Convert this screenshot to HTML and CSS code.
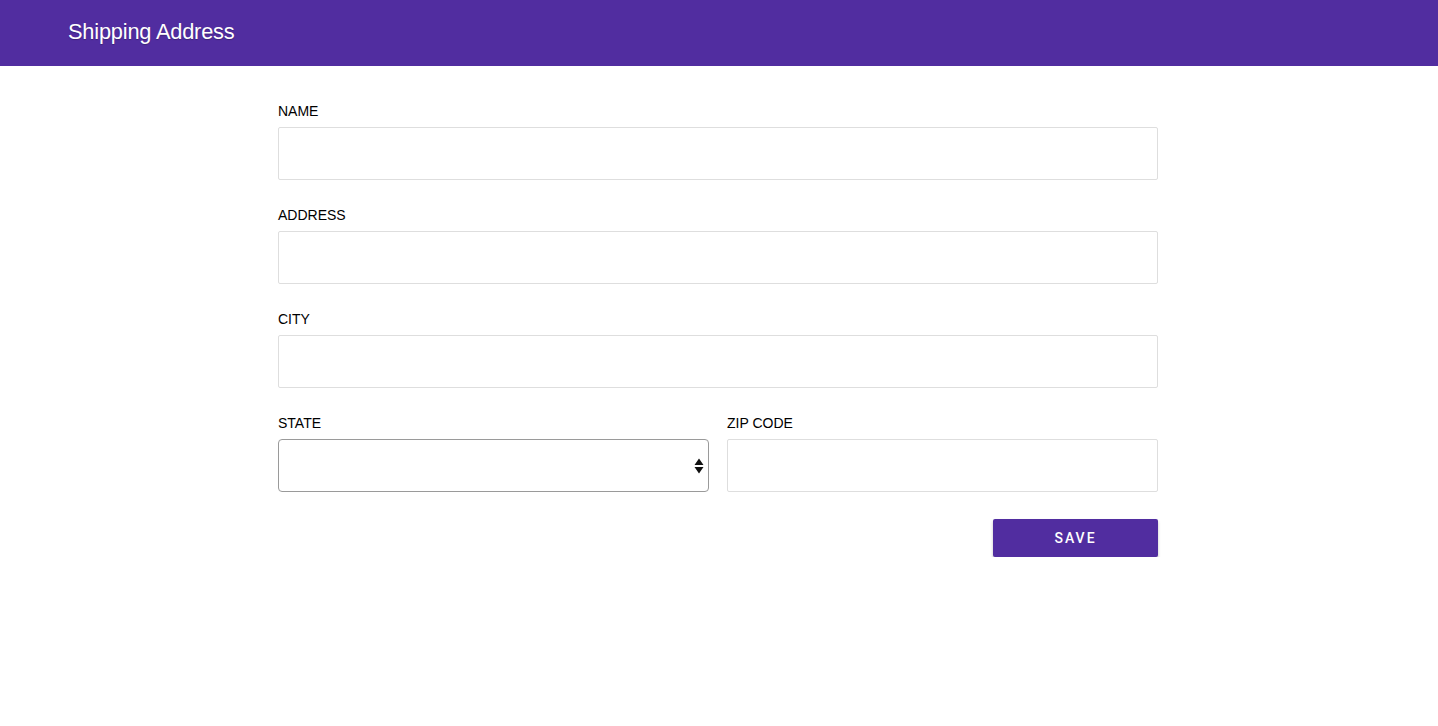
FILE: index.html
```html
<!DOCTYPE html>
<html lang="en">
<head>
<meta charset="utf-8">
<title>Shipping Address</title>
<link rel="stylesheet" href="styles.css">
</head>
<body>
<header class="topbar">
  <h1 class="title">Shipping Address</h1>
</header>
<main class="form">
  <div class="field">
    <label class="label">NAME</label>
    <div class="input"></div>
  </div>
  <div class="field">
    <label class="label">ADDRESS</label>
    <div class="input"></div>
  </div>
  <div class="field">
    <label class="label">CITY</label>
    <div class="input"></div>
  </div>
  <div class="row">
    <div class="field">
      <label class="label">STATE</label>
      <div class="select">
        <svg class="arrows" width="10" height="18" viewBox="0 0 10 18"><path d="M5 1.5 L9.5 8 L0.5 8 Z M0.5 10 L9.5 10 L5 16.5 Z" fill="#111"/></svg>
      </div>
    </div>
    <div class="field">
      <label class="label">ZIP CODE</label>
      <div class="input"></div>
    </div>
  </div>
  <div class="actions">
    <button class="save">SAVE</button>
  </div>
</main>
</body>
</html>
```
FILE: styles.css
```css
* { box-sizing: border-box; }
html, body { margin: 0; padding: 0; background: #fff; }
body { font-family: "Liberation Sans", Arial, sans-serif; color: #000; }
.topbar {
  height: 66px;
  background: #512da0;
  display: flex;
  align-items: center;
  padding-left: 68px;
}
.title {
  margin: 0;
  color: #fff;
  font-size: 21.8px;
  font-weight: normal;
  letter-spacing: -0.2px;
  text-shadow: 0 1px 1px rgba(0,0,0,0.25);
  transform: translateY(-1px);
}
.form {
  width: 880px;
  margin: 0 auto;
  padding-top: 37px;
  transform: translateX(-1px);
}
.field { margin-bottom: 27px; }
.label {
  display: block;
  font-size: 14px;
  line-height: 16px;
  margin-bottom: 8px;
}
.input {
  height: 53px;
  border: 1px solid #dedede;
  border-radius: 2px;
  background: #fff;
}
.select {
  height: 53px;
  border: 1px solid #9a9a9a;
  border-radius: 4px;
  display: flex;
  align-items: center;
  justify-content: flex-end;
  padding-right: 4px;
}
.row {
  display: grid;
  grid-template-columns: 431px 431px;
  justify-content: space-between;
}
.actions {
  display: flex;
  justify-content: flex-end;
}
.save {
  width: 165px;
  height: 38px;
  border: none;
  border-radius: 2px;
  background: #512da0;
  color: #fff;
  font-family: Roboto, "Liberation Sans", sans-serif;
  font-weight: 500;
  font-size: 14px;
  letter-spacing: 2px;
  padding-left: 6px;
  box-shadow: 0 2px 3px rgba(0,0,0,0.25);
  cursor: pointer;
}
```
